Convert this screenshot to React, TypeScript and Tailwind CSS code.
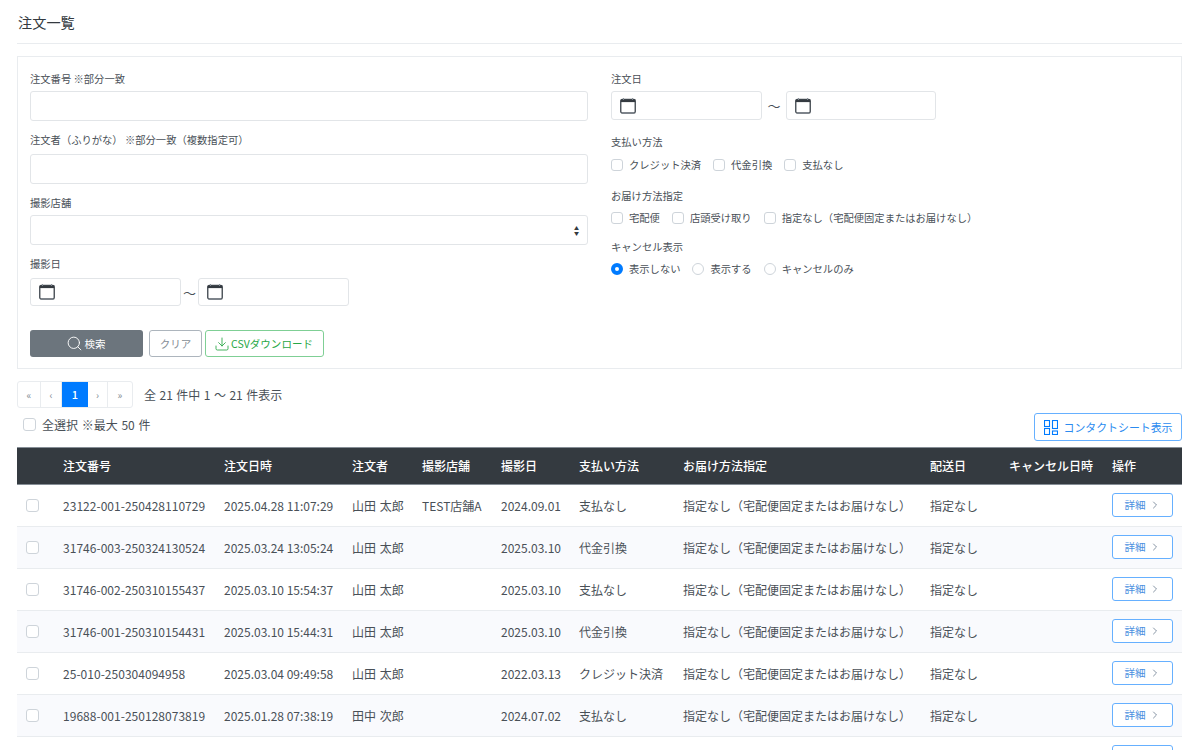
import React from 'react'
import { ChevronRight, Download, Search } from 'lucide-react'

interface OrderRow {
  no: string
  orderedAt: string
  name: string
  shop: string
  shotOn: string
  payment: string
}

const orders: OrderRow[] = [
  { no: '23122-001-250428110729', orderedAt: '2025.04.28 11:07:29', name: '山田 太郎', shop: 'TEST店舗A', shotOn: '2024.09.01', payment: '支払なし' },
  { no: '31746-003-250324130524', orderedAt: '2025.03.24 13:05:24', name: '山田 太郎', shop: '', shotOn: '2025.03.10', payment: '代金引換' },
  { no: '31746-002-250310155437', orderedAt: '2025.03.10 15:54:37', name: '山田 太郎', shop: '', shotOn: '2025.03.10', payment: '支払なし' },
  { no: '31746-001-250310154431', orderedAt: '2025.03.10 15:44:31', name: '山田 太郎', shop: '', shotOn: '2025.03.10', payment: '代金引換' },
  { no: '25-010-250304094958', orderedAt: '2025.03.04 09:49:58', name: '山田 太郎', shop: '', shotOn: '2022.03.13', payment: 'クレジット決済' },
  { no: '19688-001-250128073819', orderedAt: '2025.01.28 07:38:19', name: '田中 次郎', shop: '', shotOn: '2024.07.02', payment: '支払なし' },
]

const headers = ['', '注文番号', '注文日時', '注文者', '撮影店舗', '撮影日', '支払い方法', 'お届け方法指定', '配送日', 'キャンセル日時', '操作']

function CalendarIcon() {
  return (
    <svg width="16" height="16" viewBox="0 0 16 16" fill="none">
      <rect x="0.75" y="1.5" width="14.5" height="13.5" rx="1.5" stroke="#495057" strokeWidth="1.4" />
      <rect x="0.75" y="1.5" width="14.5" height="2.6" fill="#343a40" />
      <line x1="3.5" y1="0" x2="3.5" y2="2" stroke="#868e96" strokeWidth="1" />
      <line x1="12.5" y1="0" x2="12.5" y2="2" stroke="#868e96" strokeWidth="1" />
      <line x1="1.5" y1="15" x2="14.5" y2="15" stroke="#868e96" strokeWidth="1" />
    </svg>
  )
}

function DateInput({ className }: { className: string }) {
  return (
    <div className={`flex items-center pl-[8px] border border-[#e2e5e8] rounded-[3px] bg-white ${className}`}>
      <CalendarIcon />
    </div>
  )
}

function Check({ label }: { label: string }) {
  return (
    <div className="flex items-center gap-[6px]">
      <span className="w-[12px] h-[12px] border border-[#ced4da] rounded-[3px] bg-white"></span>
      <span>{label}</span>
    </div>
  )
}

function Radio({ label, checked }: { label: string; checked?: boolean }) {
  return (
    <div className="flex items-center gap-[6px]">
      {checked
        ? <span className="w-[12px] h-[12px] rounded-full border-[4px] border-[#007bff] bg-white"></span>
        : <span className="w-[12px] h-[12px] rounded-full border border-[#ced4da] bg-white"></span>}
      <span>{label}</span>
    </div>
  )
}

function Pager({ label, className }: { label: string; className: string }) {
  return <span className={`flex items-center justify-center text-[10px] text-[#868e96] border-r border-[#e9ecef] ${className}`}>{label}</span>
}

function DetailButton() {
  return (
    <button className="flex items-center justify-center gap-[3px] w-[61px] h-[24px] border border-[#66b0ff] rounded-[3px] bg-white text-[10.6px] text-[#4a8fe0]">
      詳細
      <ChevronRight size={12} color="#5f7186" strokeWidth={1.5} />
    </button>
  )
}

export default function App() {
  return (
    <div className="h-[750px] overflow-hidden bg-white pl-[17px] pr-[18px] font-['Noto_Sans_CJK_JP',sans-serif] text-[#495057]">
      <h1 className="h-[44px] pt-[11px] pl-px text-[14.2px] leading-[22px] font-normal text-[#343a40] border-b border-[#e9ecef]">注文一覧</h1>

      {/* search form */}
      <div className="mt-[12px] h-[313px] border border-[#e9ecef] px-[12px] pt-[14px] text-[10.3px] leading-[16px]">
        <div className="flex h-[259px]">
          <div className="w-[558px]">
            <label className="block">注文番号 ※部分一致</label>
            <input className="block w-full h-[30px] mt-[4px] border border-[#e2e5e8] rounded-[3px]" />
            <label className="block mt-[11px]">注文者（ふりがな） ※部分一致（複数指定可）</label>
            <input className="block w-full h-[30px] mt-[6px] border border-[#e2e5e8] rounded-[3px]" />
            <label className="block mt-[11px]">撮影店舗</label>
            <div className="relative h-[30px] mt-[4px] border border-[#e2e5e8] rounded-[3px]">
              <span className="absolute right-[8px] top-[9px] text-[5px] leading-[5px] text-[#343a40]">▲<br />▼</span>
            </div>
            <label className="block mt-[11px]">撮影日</label>
            <div className="flex items-center mt-[6px]">
              <DateInput className="w-[151px] h-[28px]" />
              <span className="w-[17px] text-center text-[13px] leading-none">〜</span>
              <DateInput className="w-[151px] h-[28px]" />
            </div>
          </div>

          <div className="ml-[23px]">
            <label className="block">注文日</label>
            <div className="flex items-center mt-[4px]">
              <DateInput className="w-[151px] h-[29px]" />
              <span className="w-[24px] text-center text-[13px] leading-none">〜</span>
              <DateInput className="w-[150px] h-[29px]" />
            </div>
            <label className="block mt-[14px]">支払い方法</label>
            <div className="flex items-center gap-[12px] mt-[7px]">
              <Check label="クレジット決済" />
              <Check label="代金引換" />
              <Check label="支払なし" />
            </div>
            <label className="block mt-[15px]">お届け方法指定</label>
            <div className="flex items-center gap-[12px] mt-[6px]">
              <Check label="宅配便" />
              <Check label="店頭受け取り" />
              <Check label="指定なし（宅配便固定またはお届けなし）" />
            </div>
            <label className="block mt-[13px]">キャンセル表示</label>
            <div className="flex items-center gap-[12px] mt-[6px]">
              <Radio label="表示しない" checked />
              <Radio label="表示する" />
              <Radio label="キャンセルのみ" />
            </div>
          </div>
        </div>

        <div className="flex items-center h-[27px] text-[10.5px]">
          <button className="flex items-center justify-center gap-[2px] w-[113px] h-[27px] pr-[2px] rounded-[3px] bg-[#6c757d] text-white">
            <Search size={17} strokeWidth={1.3} />
            検索
          </button>
          <button className="w-[53px] h-[27px] ml-[6px] border border-[#adb5bd] rounded-[3px] text-[#868e96]">クリア</button>
          <button className="flex items-center justify-center gap-[1px] w-[119px] h-[27px] ml-[3px] pr-[2px] border border-[#7fcf95] rounded-[3px] text-[#28a745]">
            <Download size={16} strokeWidth={1.3} />
            <span className="tracking-[0.04px]">CSVダウンロード</span>
          </button>
        </div>
      </div>

      {/* pagination */}
      <div className="flex items-center mt-[12px] h-[27px] text-[12px] [word-spacing:0.8px]">
        <div className="flex h-[27px] border border-[#e9ecef] rounded-[3px]">
          <Pager label="«" className="w-[23px]" />
          <Pager label="‹" className="w-[21px]" />
          <span className="flex items-center justify-center w-[26px] bg-[#007bff] text-white text-[11px] font-medium">1</span>
          <Pager label="›" className="w-[20px]" />
          <Pager label="»" className="w-[24px] border-r-0" />
        </div>
        <span className="ml-[11px]">全 21 件中 1 〜 21 件表示</span>
      </div>

      <div className="flex justify-between h-[34px] mt-[5px] text-[12px]">
        <div className="flex items-start gap-[6px] pl-[6px] pt-[3px] [word-spacing:1px]">
          <span className="w-[13px] h-[13px] mt-[2px] border border-[#ced4da] rounded-[3px]"></span>
          <span className="leading-[18px]">全選択 ※最大 50 件</span>
        </div>
        <button className="flex items-center justify-center gap-[6px] w-[148px] h-[28px] border border-[#66b0ff] rounded-[3px] text-[10.9px] text-[#2b8bf0]">
          <svg width="14" height="15" viewBox="0 0 14 15" fill="none" stroke="#007bff" strokeWidth="1.1">
            <rect x="0.5" y="0.5" width="5" height="6" />
            <rect x="0.5" y="8.5" width="5" height="6" />
            <rect x="8.5" y="0.5" width="5" height="8" />
            <rect x="8.5" y="11" width="5" height="3.5" />
          </svg>
          コンタクトシート表示
        </button>
      </div>

      {/* order table */}
      <table className="w-[1165px] table-fixed border-collapse text-[12px] [word-spacing:1px]">
        <colgroup>
          <col className="w-[37px]" />
          <col className="w-[161px]" />
          <col className="w-[128px]" />
          <col className="w-[70px]" />
          <col className="w-[79px]" />
          <col className="w-[78px]" />
          <col className="w-[104px]" />
          <col className="w-[247px]" />
          <col className="w-[79px]" />
          <col className="w-[103px]" />
          <col className="w-[79px]" />
        </colgroup>
        <thead>
          <tr className="h-[37px] bg-[#343a40] text-white border-y border-[#868e96]">
            {headers.map((h, i) => (
              <th key={i} className="px-[9px] text-left font-medium whitespace-nowrap">{h}</th>
            ))}
          </tr>
        </thead>
        <tbody>
          {orders.map((o, i) => (
            <tr key={o.no} className={`h-[42px] border-b border-[#e9ecef] ${i % 2 === 1 ? 'bg-[#f9fafd]' : 'bg-white'}`}>
              <td className="pl-[9px]"><span className="block w-[13px] h-[13px] border border-[#ced4da] rounded-[3px] bg-white"></span></td>
              <td className="px-[9px] whitespace-nowrap tracking-[0.03px]">{o.no}</td>
              <td className="px-[9px] whitespace-nowrap [word-spacing:0px]">{o.orderedAt}</td>
              <td className="px-[9px] whitespace-nowrap">{o.name}</td>
              <td className="px-[9px] whitespace-nowrap">{o.shop}</td>
              <td className="px-[9px] whitespace-nowrap">{o.shotOn}</td>
              <td className="px-[9px] whitespace-nowrap">{o.payment}</td>
              <td className="px-[9px] whitespace-nowrap">指定なし（宅配便固定またはお届けなし）</td>
              <td className="px-[9px] whitespace-nowrap">指定なし</td>
              <td className="px-[9px]"></td>
              <td className="px-[9px] pb-[2px]"><DetailButton /></td>
            </tr>
          ))}
          <tr className="h-[42px]">
            <td colSpan={10}></td>
            <td className="px-[9px] pb-[2px]"><DetailButton /></td>
          </tr>
        </tbody>
      </table>
    </div>
  )
}
